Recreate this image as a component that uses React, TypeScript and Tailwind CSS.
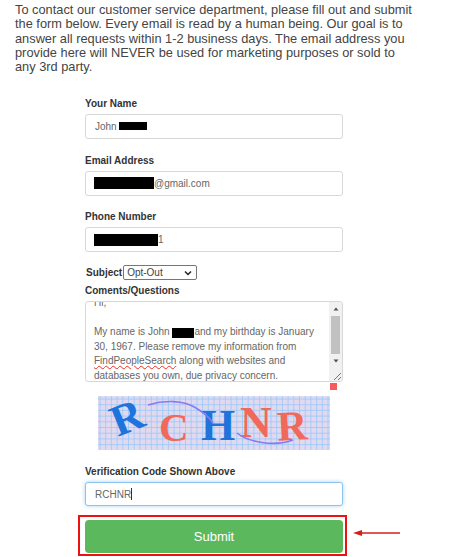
function Label({ children }: { children: React.ReactNode }) {
  return <label className="block text-[10px] leading-[14px] font-bold text-[#333]">{children}</label>;
}

function Bar({ className }: { className: string }) {
  return <span className={`inline-block bg-black align-middle ${className}`} />;
}

function Field({ children, focus }: { children: React.ReactNode; focus?: boolean }) {
  return (
    <div
      className={
        focus
          ? "mt-[3px] flex h-[24px] w-[258px] items-center rounded-[3px] border border-[#8cc4f0] bg-white px-[8px] text-[10px] text-[#666] shadow-[0_0_4px_#a8d4f5]"
          : "mt-[3px] flex h-[25px] w-[258px] items-center rounded-[3px] border border-[#d8d8d8] bg-white px-[8px] text-[10px] text-[#666]"
      }
    >
      {children}
    </div>
  );
}

function Captcha() {
  const v = [];
  const h = [];
  for (let x = 2; x < 232; x += 5.7) v.push(x);
  for (let y = 3; y < 54; y += 5.7) h.push(y);
  return (
    <svg width="232" height="54" viewBox="0 0 232 54" className="block">
      <rect width="232" height="54" fill="#e2d9ef" />
      {v.map((x) => (
        <line key={x} x1={x} x2={x} y1="0" y2="54" stroke="#96c9fb" strokeWidth="0.8" />
      ))}
      {h.map((y) => (
        <line key={y} x1="0" x2="232" y1={y} y2={y} stroke="#96c9fb" strokeWidth="0.8" />
      ))}
      <g fontFamily="'Liberation Serif', serif" fontWeight="700">
        <text x="13" y="36" fontSize="44" fill="#1f74dc" transform="rotate(-22 29 21)">R</text>
        <text x="61" y="45" fontSize="41" fill="#f0695a">C</text>
        <text x="103" y="44" fontSize="44" fill="#1f74dc">H</text>
        <text x="142" y="41" fontSize="44" fill="#f0695a">N</text>
        <text x="179" y="44" fontSize="42" fill="#f0695a" transform="rotate(-3 195 29)">R</text>
      </g>
      <path d="M50 9 C66 4 86 4 98 12 C106 17 112 22 115 27" fill="none" stroke="#8a78f2" strokeWidth="1.6" />
      <path d="M139 37 C150 46 176 51 195 44" fill="none" stroke="#8a78f2" strokeWidth="1.6" />
    </svg>
  );
}

export default function App() {
  return (
    <div className="relative h-[557px] w-[451px] overflow-hidden bg-white font-['Liberation_Sans',Arial,sans-serif] text-[#444]">
      <p className="w-[415px] pl-[15px] pt-[3px] text-[12.8px] leading-[14.3px] text-[#444]">
        To contact our customer service department, please fill out and submit the form below. Every email is read by a human being. Our goal is to answer all requests within 1-2 business days. The email address you provide here will NEVER be used for marketing purposes or sold to any 3rd party.
      </p>

      <form className="ml-[85px] mt-[23px] w-[258px]">
        <Label>Your Name</Label>
        <Field>
          <span className="ml-[1px]">John</span>
          <Bar className="-mt-[2px] ml-[2px] h-[8px] w-[28px]" />
        </Field>

        <div className="mt-[14.5px]">
          <Label>Email Address</Label>
          <Field>
            <Bar className="h-[12px] w-[60px]" />
            <span>@gmail.com</span>
          </Field>
        </div>

        <div className="mt-[14.5px]">
          <Label>Phone Number</Label>
          <Field>
            <Bar className="h-[12px] w-[64px]" />
            <span>1</span>
          </Field>
        </div>

        <div className="mt-[13px] flex h-[15px] items-center">
          <span className="ml-[1px] text-[10px] font-bold text-[#333]">Subject</span>
          <div className="ml-[1px] flex h-[15px] w-[74px] items-center justify-between rounded-[2px] border border-[#767676] bg-white pl-[3px] pr-[4px] text-[10px] text-[#444]">
            <span>Opt-Out</span>
            <svg width="8" height="6" viewBox="0 0 8 6"><path d="M1 1.5 L4 4.5 L7 1.5" fill="none" stroke="#222" strokeWidth="1.5" /></svg>
          </div>
        </div>

        <div className="mt-[4px]">
          <Label>Coments/Questions</Label>
        </div>
        <div className="relative mt-[3px] flex h-[81px] w-[258px] overflow-hidden rounded-[3px] border border-[#d8d8d8] bg-white">
          <div className="w-[244px] overflow-hidden pl-[8px] pr-[10px] text-[10px] leading-[14.4px] text-[#666]">
            <div className="-mt-[6px]">Hi,</div>
            <div className="h-[14.4px]" />
            <div>My name is John <Bar className="h-[10px] w-[22px]" />and my birthday is January 30, 1967. Please remove my information from</div>
            <div>
              <span className="underline decoration-wavy decoration-[#e8301f] decoration-1">FindPeopleSearch</span> along with websites and databases you own, <span className="underline decoration-[#f04a40] decoration-[1.5px] underline-offset-2">due</span> privacy <span className="underline decoration-[#f04a40] decoration-[1.5px] underline-offset-2">concern.</span>
            </div>
          </div>
          <div className="flex w-[13px] flex-col items-center bg-[#f1f1f1]">
            <svg width="8" height="14" viewBox="0 0 8 14"><path d="M1.5 8.5 L4 5.5 L6.5 8.5 Z" fill="#505050" /></svg>
            <div className="h-[38px] w-[9px] bg-[#c1c1c1]" />
            <svg width="8" height="14" viewBox="0 0 8 14"><path d="M1.5 5.5 L4 8.5 L6.5 5.5 Z" fill="#505050" /></svg>
            <svg width="13" height="12" viewBox="0 0 13 12" className="mt-auto"><path d="M5 11 L12 4 M9 11 L12 8" stroke="#777" strokeWidth="1" fill="none" /></svg>
          </div>
        </div>
        <div className="ml-[245px] mt-[1px] h-[7px] w-[7px] bg-[#f55d5d]" />

        <div className="ml-[13px] mt-[6px]">
          <Captcha />
        </div>

        <div className="mt-[15px]">
          <Label>Verification Code Shown Above</Label>
        </div>
        <Field focus>
          <span className="ml-[1px]">RCHNR</span>
          <span className="h-[12px] w-px bg-[#333]" />
        </Field>

        <div className="-ml-[7px] mt-[9px] w-[269px] border-[2px] border-[#ee1111] pb-[1px] pl-[5px] pt-[3px]">
          <button type="button" className="block h-[33px] w-[258px] rounded-[4px] bg-[#5cb85c] text-[13px] text-white">
            Submit
          </button>
        </div>
      </form>

      <svg width="50" height="10" viewBox="0 0 50 10" className="absolute left-[352px] top-[528px]">
        <path d="M48 5 H8" stroke="#d91c1c" strokeWidth="1.5" />
        <path d="M1 5 L10 2 V8 Z" fill="#d91c1c" />
      </svg>
    </div>
  );
}
